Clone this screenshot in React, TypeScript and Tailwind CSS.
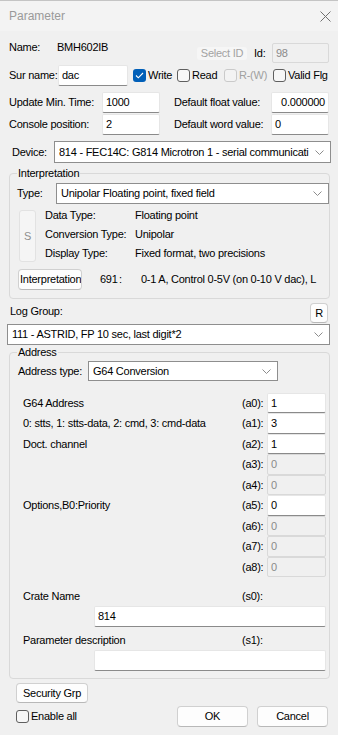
import React from "react";

const Chevron = () => (
  <svg width="9" height="5" viewBox="0 0 9 5" className="shrink-0">
    <path d="M0.5 0.5L4.5 4.5L8.5 0.5" fill="none" stroke="#8c8c8c" strokeWidth="1" />
  </svg>
);

function Combo({ value, className }: { value: string; className: string }) {
  return (
    <div className={`flex items-center bg-white border border-[#8e8e8e] pl-[4px] pr-[6px] ${className}`}>
      <span className="flex-1 min-w-0 overflow-hidden whitespace-nowrap mr-[4px]">{value}</span>
      <Chevron />
    </div>
  );
}

function Edit({
  value = "",
  className = "",
  disabled = false,
  right = false,
}: {
  value?: string;
  className?: string;
  disabled?: boolean;
  right?: boolean;
}) {
  return (
    <div
      className={`flex items-center px-[3px] rounded-[2px] border ${
        disabled
          ? "bg-[#f0f0f0] border-[#d9d9d9] text-[#8a8a8a]"
          : "bg-white border-[#e6e6e6] border-b-[#8a8a8a]"
      } ${right ? "justify-end" : ""} ${className}`}
    >
      {value}
    </div>
  );
}

function Check({
  label,
  checked = false,
  disabled = false,
  className = "",
}: {
  label: string;
  checked?: boolean;
  disabled?: boolean;
  className?: string;
}) {
  return (
    <div className={`flex items-center ${className}`}>
      {checked ? (
        <div className="w-[13px] h-[13px] rounded-[3px] bg-[#005fb8] flex items-center justify-center shrink-0">
          <svg width="9" height="7" viewBox="0 0 9 7">
            <path d="M1 3.5L3.3 5.8L8 1" fill="none" stroke="white" strokeWidth="1.1" />
          </svg>
        </div>
      ) : (
        <div
          className={`w-[13px] h-[13px] rounded-[3px] border shrink-0 ${
            disabled ? "border-[#cacaca] bg-[#f3f3f3]" : "border-[#5f5f5f] bg-[#f7f7f7]"
          }`}
        />
      )}
      <span className={`ml-[2px] whitespace-nowrap ${disabled ? "text-[#a0a0a0]" : ""}`}>{label}</span>
    </div>
  );
}

function Btn({ children, className = "" }: { children: React.ReactNode; className?: string }) {
  return (
    <div
      className={`flex items-center bg-[#fdfdfd] border border-[#d0d0d0] border-b-[#b8b8b8] rounded-[4px] whitespace-nowrap overflow-hidden ${className}`}
    >
      {children}
    </div>
  );
}

const addrRows = [
  { label: "G64 Address", key: "(a0):", value: "1", on: true, h: "h-[20px]" },
  { label: "0: stts, 1: stts-data, 2: cmd, 3: cmd-data", key: "(a1):", value: "3", on: true, h: "h-[21px]" },
  { label: "Doct. channel", key: "(a2):", value: "1", on: true, h: "h-[20px]" },
  { label: "", key: "(a3):", value: "0", on: false, h: "h-[21px]" },
  { label: "", key: "(a4):", value: "0", on: false, h: "h-[20px]" },
  { label: "Options,B0:Priority", key: "(a5):", value: "0", on: true, h: "h-[21px]" },
  { label: "", key: "(a6):", value: "0", on: false, h: "h-[20px]" },
  { label: "", key: "(a7):", value: "0", on: false, h: "h-[21px]" },
  { label: "", key: "(a8):", value: "0", on: false, h: "h-[20px]" },
];

export default function App() {
  return (
    <div className="w-[338px] h-[735px] bg-[#f0f0f0] overflow-hidden text-[11px] leading-[13px] text-black tracking-[-0.25px] font-['Liberation_Sans',Arial,sans-serif]">
      {/* title bar */}
      <div className="h-[31px] bg-[#f3f3f3] border-t border-[#c4c4c4] flex items-center justify-between pl-[9px] pr-[7px]">
        <span className="text-[12px] text-[#9a9a9a] tracking-normal">Parameter</span>
        <svg width="11" height="11" viewBox="0 0 11 11">
          <path d="M0.5 0.5L10.5 10.5M10.5 0.5L0.5 10.5" stroke="#707070" strokeWidth="1" />
        </svg>
      </div>

      {/* name / id */}
      <div className="flex items-start mt-[10px] h-[23px]">
        <span className="ml-[9px] w-[48px]">Name:</span>
        <span className="w-[140px]">BMH602IB</span>
        <div className="w-[50px] h-[13px] mt-[6px] rounded-[3px] bg-[#f6f6f6] text-[#a3a3a3] flex items-center justify-center">
          Select ID
        </div>
        <span className="ml-[7px] w-[18px] mt-[6px]">Id:</span>
        <Edit disabled value="98" className="w-[57px] h-[20px] mt-[2px]" />
      </div>

      {/* sur name + flags */}
      <div className="flex items-center mt-[1px] h-[21px]">
        <span className="ml-[9px] w-[49px]">Sur name:</span>
        <Edit value="dac" className="w-[70px] h-[21px]" />
        <Check checked label="Write" className="ml-[5px] w-[44px]" />
        <Check label="Read" className="w-[47px]" />
        <Check disabled label="R-(W)" className="w-[49px]" />
        <Check label="Valid Flg" />
      </div>

      <div className="flex items-center mt-[6px] h-[21px]">
        <span className="ml-[9px] w-[93px]">Update Min. Time:</span>
        <Edit value="1000" className="w-[58px] h-[21px]" />
        <span className="ml-[14px] w-[97px]">Default float value:</span>
        <Edit value="0.000000" right className="w-[58px] h-[21px]" />
      </div>

      <div className="flex items-center mt-[1px] h-[21px]">
        <span className="ml-[9px] w-[93px]">Console position:</span>
        <Edit value="2" className="w-[58px] h-[21px]" />
        <span className="ml-[14px] w-[97px]">Default word value:</span>
        <Edit value="0" className="w-[58px] h-[21px]" />
      </div>

      <div className="flex items-center mt-[6px] h-[22px]">
        <span className="ml-[12px] w-[42px]">Device:</span>
        <Combo value="814 - FEC14C: G814 Microtron 1 - serial communicati" className="w-[277px] h-[22px]" />
      </div>

      {/* interpretation */}
      <fieldset className="mt-[3px] ml-[9px] w-[321px] border border-[#d9d9d9] rounded-[4px] pb-[8px]">
        <legend className="ml-[7px] px-[1px] leading-[14px]">Interpretation</legend>
        <div className="flex items-center mt-[3px] h-[21px]">
          <span className="ml-[7px] w-[39px]">Type:</span>
          <Combo value="Unipolar Floating point, fixed field" className="w-[273px] h-[21px]" />
        </div>
        <div className="flex items-start mt-[2px]">
          <div className="ml-[9px] mt-[4px] w-[17px] h-[52px] rounded-[3px] bg-[#f5f5f5] border border-[#e2e2e2] text-[#8f8f8f] flex items-center justify-center">
            S
          </div>
          <div className="ml-[9px] flex flex-col leading-[19px]">
            <div className="flex">
              <span className="w-[90px]">Data Type:</span>
              <span>Floating point</span>
            </div>
            <div className="flex">
              <span className="w-[90px]">Conversion Type:</span>
              <span>Unipolar</span>
            </div>
            <div className="flex">
              <span className="w-[90px]">Display Type:</span>
              <span>Fixed format, two precisions</span>
            </div>
          </div>
        </div>
        <div className="flex items-center mt-[6px] h-[21px]">
          <Btn className="ml-[8px] w-[64px] h-[21px] pl-[1px]">Interpretation</Btn>
          <span className="ml-[18px] w-[19px]">691</span>
          <span className="w-[22px]">:</span>
          <span className="whitespace-nowrap">0-1 A, Control 0-5V (on 0-10 V dac), L</span>
        </div>
      </fieldset>

      {/* log group */}
      <div className="flex items-start mt-[4px] h-[20px]">
        <span className="ml-[10px] mt-[2px]">Log Group:</span>
        <Btn className="ml-auto mr-[10px] w-[18px] h-[20px] justify-center">R</Btn>
      </div>
      <Combo value="111 - ASTRID, FP 10 sec, last digit*2" className="mt-[1px] ml-[7px] w-[323px] h-[21px]" />

      {/* address */}
      <fieldset className="ml-[9px] w-[321px] border border-[#d9d9d9] rounded-[4px] pb-[7px]">
        <legend className="ml-[7px] px-[1px] leading-[14px]">Address</legend>
        <div className="flex items-center mt-[2px] h-[20px]">
          <span className="ml-[8px] w-[70px]">Address type:</span>
          <Combo value="G64 Conversion" className="w-[190px] h-[20px]" />
        </div>
        <div className="mt-[12px] flex flex-col">
          {addrRows.map((r) => (
            <div key={r.key} className={`flex items-center ${r.h}`}>
              <span className="ml-[13px] w-[219px] whitespace-nowrap">{r.label}</span>
              <span className="w-[25px]">{r.key}</span>
              <Edit value={r.value} disabled={!r.on} className="w-[59px] h-full" />
            </div>
          ))}
        </div>
        <div className="flex items-center mt-[12px] h-[14px]">
          <span className="ml-[13px] w-[219px]">Crate Name</span>
          <span>(s0):</span>
        </div>
        <Edit value="814" className="mt-[3px] ml-[84px] w-[232px] h-[21px]" />
        <div className="flex items-center mt-[6px] h-[14px]">
          <span className="ml-[13px] w-[219px]">Parameter description</span>
          <span>(s1):</span>
        </div>
        <Edit className="mt-[3px] ml-[84px] w-[232px] h-[21px]" />
      </fieldset>

      <Btn className="mt-[4px] ml-[16px] w-[72px] h-[20px] justify-center">Security Grp</Btn>

      <div className="flex items-center mt-[3px] h-[21px]">
        <Check label="Enable all" className="ml-[16px]" />
        <div className="ml-auto mr-[10px] flex gap-[9px]">
          <Btn className="w-[71px] h-[21px] justify-center">OK</Btn>
          <Btn className="w-[71px] h-[21px] justify-center">Cancel</Btn>
        </div>
      </div>
    </div>
  );
}
